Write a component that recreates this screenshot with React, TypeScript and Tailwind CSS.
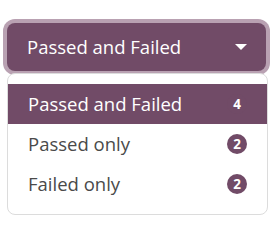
import { useState } from 'react';

const options = [
  { label: 'Passed and Failed', count: 4 },
  { label: 'Passed only', count: 2 },
  { label: 'Failed only', count: 2 },
];

export default function App() {
  const [selected, setSelected] = useState(0);

  return (
    <div className="w-[274px] h-[234px] bg-white px-[7px] pt-[23px]" style={{ fontFamily: '"Open Sans", "Noto Sans", sans-serif' }}>
      {/* Toggle button */}
      <button className="flex h-[48px] w-[259px] items-center justify-between rounded-lg bg-[#714b67] pl-[20px] pr-[19px] text-[18.5px] text-white ring-4 ring-[#b9a1b2]">
        <span>{options[selected].label}</span>
        <svg width="12" height="6" viewBox="0 0 12 6">
          <path d="M0 0 L12 0 L6 6 Z" fill="white" />
        </svg>
      </button>

      {/* Menu */}
      <div className="mt-[2px] w-[261px] rounded-lg border border-[#dcdcdc] bg-white py-[10px]">
        {options.map((opt, i) => (
          <div
            key={opt.label}
            onClick={() => setSelected(i)}
            className={`flex h-[40px] items-center justify-between pl-[20px] pr-[20px] text-[18.5px] ${
              i === selected ? 'bg-[#714b67] text-white' : 'text-[#4a4a4a]'
            }`}
          >
            <span>{opt.label}</span>
            <span className="flex h-[20px] w-[20px] items-center justify-center rounded-full bg-[#714b67] text-[13.5px] font-bold text-white">
              {opt.count}
            </span>
          </div>
        ))}
      </div>
    </div>
  );
}
